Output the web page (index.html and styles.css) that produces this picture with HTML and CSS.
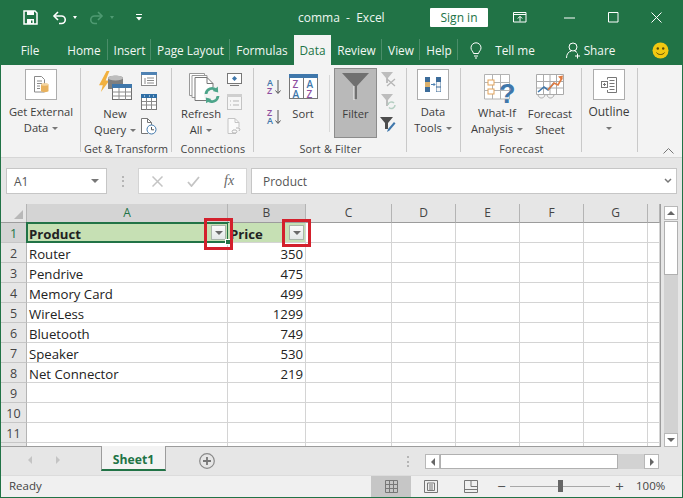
FILE: index.html
```html
<!DOCTYPE html>
<html lang="en">
<head>
<meta charset="utf-8">
<title>comma - Excel</title>
<link rel="stylesheet" href="styles.css">
</head>
<body>
<div class="window">
  <header class="titlebar">
    <svg class="qa qa-save" width="15" height="15" viewBox="0 0 15 15"><path d="M1 1h11l2 2v11H1z" fill="none" stroke="#fff" stroke-width="1.5"/><rect x="4" y="1" width="7" height="4" fill="#fff"/><rect x="4" y="9" width="7" height="5" fill="#fff"/><rect x="8" y="10.500" width="1.500" height="2.500" fill="#217346"/></svg>
    <svg class="qa qa-undo" width="15" height="14" viewBox="0 0 15 14"><path d="M2 5h7.500a3.700 3.700 0 0 1 0 7.500H7" fill="none" stroke="#fff" stroke-width="1.600"/><path d="M6 1 2 5l4 4" fill="none" stroke="#fff" stroke-width="1.600"/></svg>
    <span class="qa-caret"></span>
    <svg class="qa qa-redo" width="15" height="14" viewBox="0 0 15 14"><path d="M13 5H5.500a3.700 3.700 0 0 0 0 7.500H8" fill="none" stroke="#4f9a72" stroke-width="1.600"/><path d="m9 1 4 4-4 4" fill="none" stroke="#4f9a72" stroke-width="1.600"/></svg>
    <span class="qa-caret qa-caret-dim"></span>
    <svg class="qa qa-more" width="6" height="7" viewBox="0 0 6 7"><path d="M0 .5h6" stroke="#fff"/><path d="m0 3 3 3.500L6 3z" fill="#fff"/></svg>
    <span class="doc-title">comma&nbsp; -&nbsp; Excel</span>
    <span class="signin">Sign in</span>
    <svg class="win win-ribbon" width="14" height="11" viewBox="0 0 14 11"><path d="M.5.500h12.500v9.500H.5zM.5 2.500h12.500" fill="none" stroke="#fff"/><path d="M7 9.500V4.500M4.800 6.500 7 4.300l2.200 2.200" fill="none" stroke="#fff"/></svg>
    <svg class="win win-min" width="11" height="2" viewBox="0 0 11 2"><path d="M0 1h11" stroke="#fff"/></svg>
    <svg class="win win-max" width="11" height="11" viewBox="0 0 11 11"><path d="M.5.500h9.500v9.500H.5z" fill="none" stroke="#fff"/></svg>
    <svg class="win win-close" width="11" height="11" viewBox="0 0 11 11"><path d="m.5.500 10 10m0-10-10 10" stroke="#fff"/></svg>
  </header>

  <nav class="tabs">
    <span class="tab tab-file">File</span>
    <span class="tab tab-home sep">Home</span>
    <span class="tab tab-insert sep">Insert</span>
    <span class="tab tab-layout sep">Page Layout</span>
    <span class="tab tab-formulas">Formulas</span>
    <span class="tab tab-data">Data</span>
    <span class="tab tab-review sep">Review</span>
    <span class="tab tab-view sep">View</span>
    <span class="tab tab-help sep">Help</span>
    <svg class="tell-bulb" width="12" height="17" viewBox="0 0 12 17"><path d="M3.500 11.500C3 9 1 8.500 1 5.800a5 5 0 0 1 10 0C11 8.500 9 9 8.500 11.500zM4 14h4M5 16h2" fill="none" stroke="#fff"/></svg>
    <span class="tab tab-tell">Tell me</span>
    <svg class="share-icon" width="16" height="17" viewBox="0 0 16 17"><circle cx="7" cy="5" r="4" fill="none" stroke="#fff"/><path d="M.5 16c0-4 2-6.500 5-7M8.500 9c1 .2 2 .8 2.500 1.500M11.500 11.500v5M9 14h5" fill="none" stroke="#fff"/></svg>
    <span class="tab tab-share">Share</span>
    <svg class="smiley" width="17" height="17" viewBox="0 0 17 17"><circle cx="8.500" cy="8.500" r="8" fill="#f2c811"/><circle cx="5.800" cy="6.500" r="1.200" fill="#5a4a08"/><circle cx="11.200" cy="6.500" r="1.200" fill="#5a4a08"/><path d="M4.500 10.500c1.500 2.700 6.500 2.700 8 0" fill="none" stroke="#5a4a08"/></svg>
  </nav>

  <section class="ribbon">
    <div class="group g-ext">
      <div class="gbody">
        <div class="big big-ext">
          <span class="iconbox"><svg width="15" height="17" viewBox="0 0 15 17"><path d="M.5.500h7l3 3V16H.5z" fill="#fff" stroke="#8a8a8a"/><path d="M3 5h5M3 7.500h5M3 10h3M3 12.500h3" stroke="#8a8a8a"/><path d="M7 8.500c0-1.500 7.500-1.500 7.500 0V15c0 1.500-7.500 1.500-7.500 0z" fill="#e8b25e"/><ellipse cx="10.800" cy="8.500" rx="3.700" ry="1.200" fill="#f4d6a4"/></svg></span>
          <span class="lines"><span>Get External</span><span>Data <i class="caret"></i></span></span>
        </div>
      </div>
    </div>

    <div class="group g-get">
      <div class="gbody">
        <div class="big big-query">
          <svg class="bigicon" width="34" height="30" viewBox="0 0 34 30"><path d="M8 0 0 15h4l-2 7 9-12H7l4-10z" fill="#f2b13f" transform="translate(0 0) scale(.95)"/><path d="M9 7c0-3 15-3 15 0v20H14V18H9z" fill="#7f7f7f"/><ellipse cx="16.500" cy="7" rx="7.500" ry="2.600" fill="#bdbdbd"/><rect x="13.500" y="13.500" width="19" height="15" fill="#fff" stroke="#6e6e6e"/><rect x="13" y="13" width="20" height="4" fill="#3f77ab"/><path d="M13.500 21h19M13.500 25h19M20 17v12M26.500 17v12" stroke="#8c8c8c"/></svg>
          <span class="lines"><span>New</span><span>Query <i class="caret"></i></span></span>
        </div>
        <div class="smalls smalls-get">
          <svg width="16" height="14" viewBox="0 0 16 14"><rect x=".5" y=".5" width="15" height="13" fill="#fff" stroke="#8a8a8a"/><rect width="16" height="3" fill="#4f82b3"/><path d="M6 6h7M6 8.500h7M6 11h7M4 6v6" stroke="#8a8a8a"/></svg>
          <svg width="16" height="16" viewBox="0 0 16 16"><rect x=".5" y=".5" width="15" height="15" fill="#fff" stroke="#777"/><rect width="16" height="4" fill="#2f6ea5"/><path d="M1 7.500h14M1 11h14M5.500 4v12M10.500 4v12" stroke="#8a8a8a"/><path d="M3 2h1M8 2h1M12 2h1" stroke="#fff"/></svg>
          <svg width="16" height="17" viewBox="0 0 16 17"><path d="M7 15.500H.5V.5h6l4 4v3" fill="#fff" stroke="#777"/><path d="M6.500.5v4h4" fill="none" stroke="#777"/><circle cx="10.500" cy="11.500" r="4.500" fill="#fff" stroke="#3f77ab"/><path d="M10.500 9v2.800h2.500" fill="none" stroke="#555"/></svg>
        </div>
      </div>
      <div class="glabel glabel-tight">Get &amp; Transform</div>
    </div>

    <div class="group g-conn">
      <div class="gbody">
        <div class="big big-refresh">
          <svg class="bigicon" width="31" height="30" viewBox="0 0 31 30"><path d="M.5.500h15v22H.5z" fill="#fff" stroke="#999"/><path d="M3 2.500h15v22H3z" fill="#fff" stroke="#999"/><path d="M6 4.500h12l6 6v17H6z" fill="#fff" stroke="#777"/><path d="M18 4.500v6h6" fill="none" stroke="#777"/><circle cx="23" cy="22" r="8" fill="#f3f3f3"/><path d="M17 21a6 6 0 0 1 10.500-3.500M29 23a6 6 0 0 1-10.500 3.500" fill="none" stroke="#4da58a" stroke-width="2.800"/><path d="m28.800 13.500.4 6-5.500-1.500zM17.200 30.500l-.4-6 5.500 1.500z" fill="#4da58a"/></svg>
          <span class="lines"><span>Refresh</span><span>All <i class="caret"></i></span></span>
        </div>
        <div class="smalls smalls-conn">
          <svg width="15" height="13" viewBox="0 0 15 13"><rect x=".5" y=".5" width="14" height="10" fill="#fff" stroke="#777"/><path d="m7.500 3 2.500 2.500L7.500 8 5 5.500z" fill="#3f77ab"/><path d="M3 12.500h9" stroke="#777"/></svg>
          <svg width="15" height="16" viewBox="0 0 15 16"><rect x=".5" y=".5" width="14" height="15" fill="#f6f6f6" stroke="#c4c4c4"/><rect width="15" height="3" fill="#cfcfcf"/><path d="M6 7h6M6 11h6M3 7h1M3 11h1" stroke="#b5b5b5"/></svg>
          <svg width="15" height="16" viewBox="0 0 15 16"><path d="M9 15.500H1V.5h7l4 4v5" fill="#fafafa" stroke="#c4c4c4"/><path d="M8 .5v4h4" fill="none" stroke="#c4c4c4"/><path d="M6 12h3a2 2 0 0 1 0 3H6a2 2 0 0 1 0-3zM9 10h3a2 2 0 0 1 0 3" fill="none" stroke="#b5b5b5"/></svg>
        </div>
      </div>
      <div class="glabel">Connections</div>
    </div>

    <div class="group g-sort">
      <div class="gbody">
        <div class="smalls smalls-az">
          <svg class="showall" width="14" height="17" viewBox="0 0 14 17"><text class="az az-b" x="0" y="7.500">A</text><text class="az az-p" x="0" y="16">Z</text><path d="M11 2v13M8.500 12.500 11 15.500l2.500-3" fill="none" stroke="#555"/></svg>
          <svg class="showall" width="14" height="17" viewBox="0 0 14 17"><text class="az az-p" x="0" y="7.500">Z</text><text class="az az-b" x="0" y="16">A</text><path d="M11 2v13M8.500 12.500 11 15.500l2.500-3" fill="none" stroke="#555"/></svg>
        </div>
        <div class="big big-sort">
          <svg class="bigicon showall" width="29" height="25" viewBox="0 0 29 25"><rect x=".5" y=".5" width="28" height="24" fill="#fff" stroke="#777"/><rect width="29" height="4" fill="#3f77ab"/><path d="M14.500 4v21" stroke="#777"/><text class="azl az-p" x="3.500" y="14">Z</text><text class="azl az-b" x="3.500" y="23.500">A</text><text class="azl az-b" x="17.500" y="14">A</text><text class="azl az-p" x="17.500" y="23.500">Z</text></svg>
          <span class="lines"><span>Sort</span></span>
        </div>
        <span class="vsep"></span>
        <div class="big big-filter">
          <svg class="bigicon" width="27" height="27" viewBox="0 0 27 27"><path d="M0 0h27L15 13v14h-3V13z" fill="#707070"/><path d="M12 13v14h3" fill="none" stroke="#f3f3f3"/></svg>
          <span class="lines"><span>Filter</span></span>
        </div>
        <div class="smalls smalls-filter">
          <svg width="15" height="15" viewBox="0 0 15 15"><path d="M0 0h12L7 6v5H5V6z" fill="#bdbdbd"/><path d="m6 7 8 7m0-7-8 7" stroke="#b5b5b5" stroke-width="1.300"/></svg>
          <svg width="15" height="16" viewBox="0 0 15 16"><path d="M0 0h12L7 6v6H5V6z" fill="#bdbdbd"/><path d="M7 11a3.500 3.500 0 0 1 6-2M14 11a3.500 3.500 0 0 1-6 2.500" fill="none" stroke="#b5cfc2" stroke-width="1.500"/></svg>
          <svg width="16" height="16" viewBox="0 0 16 16"><path d="M0 0h13L8 6v6H5V6z" fill="#4d4d4d"/><path d="m7 15 1-3 6-7 1.500 1.500-6 7z" fill="#3f77ab"/></svg>
        </div>
      </div>
      <div class="glabel">Sort &amp; Filter</div>
    </div>

    <div class="group g-tools">
      <div class="gbody">
        <div class="big big-tools">
          <span class="iconbox"><svg width="16" height="15" viewBox="0 0 16 15"><rect width="5" height="15" fill="#3d6d9b"/><rect y="5" width="5" height="5" fill="#dcb26e"/><rect x="11" width="5" height="15" fill="#3d6d9b"/><rect x="11.500" y="5" width="4" height="4.500" fill="#f7f7f7"/><rect x="11.500" y="10.500" width="4" height="4" fill="#f7f7f7"/><path d="M6 7.500h4M8.500 6l1.500 1.500L8.500 9" fill="none" stroke="#4f82b3"/></svg></span>
          <span class="lines"><span>Data</span><span>Tools <i class="caret"></i></span></span>
        </div>
      </div>
    </div>

    <div class="group g-fore">
      <div class="gbody">
        <div class="big big-whatif">
          <svg class="bigicon" width="32" height="36" viewBox="0 0 32 36"><path d="M.5.500h25v24.500H.5zM.5 8.500h25M.5 16.500h25M8.500.5v24.500M16.500.5v24.500" fill="#fff" stroke="#b3b3b3"/><rect x="4" y="6" width="6" height="5" fill="#fff" stroke="#e3a35a"/><rect x="4" y="15" width="6" height="5" fill="#fff" stroke="#e3a35a"/><text class="q" x="15" y="29">?</text></svg>
          <span class="lines"><span>What-If</span><span>Analysis <i class="caret"></i></span></span>
        </div>
        <div class="big big-fsheet">
          <svg class="bigicon" width="28" height="25" viewBox="0 0 28 25"><path d="M.5.500h27v20H.5zM.5 7.500h27M.5 14h27M7.500.5v20M14 .5v20M20.500.5v20" fill="#fff" stroke="#aaa"/><path d="M2 18l6-5 4 3 6-7" fill="none" stroke="#3f77ab" stroke-width="1.600"/><path d="M12 16l6-7 4 2 4-7" fill="none" stroke="#e07a3f" stroke-width="1.600"/><path d="m22 2.500 5-1-1 5z" fill="#e07a3f"/><path d="M2 21c1 4 6 4 7 0M11 21c1 4 6 4 7 0" fill="none" stroke="#aaa"/></svg>
          <span class="lines"><span>Forecast</span><span>Sheet</span></span>
        </div>
      </div>
      <div class="glabel">Forecast</div>
    </div>

    <div class="group g-out">
      <div class="gbody">
        <div class="big big-out">
          <span class="iconbox"><svg width="16" height="16" viewBox="0 0 16 16"><rect x=".5" y="4.500" width="6" height="6" fill="#fff" stroke="#777"/><path d="M2 7.500h3M3.500 6v3" stroke="#777"/><path d="M6.500 2.500V.5h9v15h-9v-2.500" fill="none" stroke="#777"/><path d="M8.500 3.500h5M8.500 6.500h5M8.500 9.500h5M8.500 12.500h5" stroke="#777"/></svg></span>
          <span class="lines"><span>Outline</span><span><i class="caret"></i></span></span>
        </div>
      </div>
    </div>
    <svg class="collapse" width="11" height="6" viewBox="0 0 11 6"><path d="m.5 5.500 5-5 5 5" fill="none" stroke="#777"/></svg>
  </section>

  <div class="formula">
    <div class="namebox"><span>A1</span><i class="caret caret-lg"></i></div>
    <span class="grip"></span>
    <div class="fbtns">
      <svg width="11" height="11" viewBox="0 0 11 11"><path d="m.5.500 10 10m0-10-10 10" stroke="#c4c4c4" stroke-width="1.500"/></svg>
      <svg width="13" height="11" viewBox="0 0 13 11"><path d="m1 6 3.500 4L12 1" fill="none" stroke="#c4c4c4" stroke-width="1.800"/></svg>
      <span class="fx">fx</span>
    </div>
    <div class="finput"><span>Product</span><svg width="8" height="6" viewBox="0 0 8 6"><path d="m1 1 3 3 3-3" fill="none" stroke="#777" stroke-width="1.500"/></svg></div>
  </div>

  <div class="sheetarea">
    <div class="gridwrap">
      <table class="grid">
        <colgroup><col class="c0"><col class="ca"><col class="cb"><col class="cc"><col class="cd"><col class="cd"><col class="cd"><col class="cd"><col class="ch"></colgroup>
        <thead>
          <tr><th class="corner"><span class="tri"></span></th><th class="hot green">A</th><th class="hot">B</th><th>C</th><th>D</th><th>E</th><th>F</th><th>G</th><th></th></tr>
        </thead>
        <tbody>
          <tr class="r1"><th class="hot green">1</th>
            <td class="hdr">Product<span class="fbtn fbtn-a"><i class="caret"></i></span><span class="sel"></span><span class="handle"></span><span class="mark mark-a"></span></td>
            <td class="hdr">Price<span class="fbtn fbtn-b"><i class="caret"></i></span><span class="mark mark-b"></span></td>
            <td></td><td></td><td></td><td></td><td></td><td></td></tr>
          <tr><th>2</th><td>Router</td><td class="num">350</td><td></td><td></td><td></td><td></td><td></td><td></td></tr>
          <tr><th>3</th><td>Pendrive</td><td class="num">475</td><td></td><td></td><td></td><td></td><td></td><td></td></tr>
          <tr><th>4</th><td>Memory Card</td><td class="num">499</td><td></td><td></td><td></td><td></td><td></td><td></td></tr>
          <tr><th>5</th><td>WireLess</td><td class="num">1299</td><td></td><td></td><td></td><td></td><td></td><td></td></tr>
          <tr><th>6</th><td>Bluetooth</td><td class="num">749</td><td></td><td></td><td></td><td></td><td></td><td></td></tr>
          <tr><th>7</th><td>Speaker</td><td class="num">530</td><td></td><td></td><td></td><td></td><td></td><td></td></tr>
          <tr><th>8</th><td>Net Connector</td><td class="num">219</td><td></td><td></td><td></td><td></td><td></td><td></td></tr>
          <tr><th>9</th><td></td><td></td><td></td><td></td><td></td><td></td><td></td><td></td></tr>
          <tr><th>10</th><td></td><td></td><td></td><td></td><td></td><td></td><td></td><td></td></tr>
          <tr><th>11</th><td></td><td></td><td></td><td></td><td></td><td></td><td></td><td></td></tr>
          <tr><th></th><td></td><td></td><td></td><td></td><td></td><td></td><td></td><td></td></tr>
        </tbody>
      </table>
    </div>
    <div class="vscroll">
      <span class="sbtn"><i class="tri-up"></i></span>
      <span class="vthumb"></span>
      <span class="vtrack"></span>
      <span class="sbtn"><i class="tri-down"></i></span>
    </div>
  </div>

  <div class="sheetbar">
    <i class="nav-l"></i>
    <i class="nav-r"></i>
    <span class="sheettab">Sheet1</span>
    <svg class="addsheet" width="16" height="16" viewBox="0 0 16 16"><circle cx="8" cy="8" r="7.300" fill="none" stroke="#8a8a8a" stroke-width="1.200"/><path d="M8 4v8M4 8h8" stroke="#777" stroke-width="1.800"/></svg>
    <span class="grip grip-h"></span>
    <div class="hscroll">
      <span class="sbtn hbtn"><i class="tri-left"></i></span>
      <span class="hthumb"></span>
      <span class="htrack"></span>
      <span class="sbtn hbtn"><i class="tri-right"></i></span>
    </div>
  </div>

  <footer class="status">
    <span class="ready">Ready</span>
    <span class="view view-on"><svg width="13" height="13" viewBox="0 0 13 13"><path d="M.5.500h12v12H.5zM.5 4.500h12M.5 8.500h12M4.500.5v12M8.500.5v12" fill="none" stroke="#777"/></svg></span>
    <span class="view"><svg width="14" height="13" viewBox="0 0 14 13"><path d="M.5.500h13v12H.5z" fill="none" stroke="#777"/><path d="M3.500 3v7.500h7V3zM5 5h4M5 7h4M5 9h4" fill="none" stroke="#777"/></svg></span>
    <span class="view"><svg width="14" height="13" viewBox="0 0 14 13"><path d="M.5.500h13v12H.5zM.5 9.500h13M7 .5v6h6.500" fill="none" stroke="#777"/></svg></span>
    <span class="zm">&#8722;</span>
    <span class="slider"><i class="knob"></i></span>
    <span class="zm zm-plus">+</span>
    <span class="zoomval">100%</span>
  </footer>
</div>
</body>
</html>
```
FILE: styles.css
```css
* { box-sizing: border-box; }
html, body { margin: 0; padding: 0; }
body { width: 683px; height: 498px; overflow: hidden; font-family: "Open Sans", "Noto Sans", sans-serif; font-size: 11.5px; color: #3c3c3c; background: #e6e6e6; }
i { display: inline-block; font-style: normal; }

.window { width: 683px; height: 498px; border: 1px solid #217346; border-top: 0; display: flex; flex-direction: column; }

/* title bar */
.titlebar { height: 35px; flex: none; margin: 0 -1px; background: #217346; display: flex; align-items: center; color: #fff; }
.qa-save { margin-left: 23px; }
.qa-undo { margin-left: 14px; }
.qa-redo { margin-left: 12px; }
.qa-more { margin-left: 22px; }
.qa-caret { width: 0; height: 0; border: 2.500px solid transparent; border-top: 3px solid #fff; border-bottom: 0; margin-left: 6px; }
.qa-caret-dim { border-top-color: #4f9a72; margin-left: 6px; }
.doc-title { margin-left: 156px; width: 132px; font-size: 12px; color: #eef6f1; white-space: nowrap; }
.signin { width: 58px; height: 19px; background: #fff; color: #217346; border-radius: 1px; font-size: 12px; line-height: 19px; text-align: center; }
.win-ribbon { margin-left: 25px; }
.win-min { margin-left: 37px; }
.win-max { margin-left: 33px; }
.win-close { margin-left: 32px; }

/* tabs */
.tabs { height: 30px; flex: none; margin: 0 -1px; background: #217346; display: flex; align-items: stretch; color: #f2f7f4; font-size: 11.800px; }
.tab { display: flex; align-items: center; justify-content: center; height: 30px; position: relative; white-space: nowrap; }
.sep::after { content: ""; position: absolute; right: 0; top: 4px; height: 21px; width: 1px; background: #4a8d69; }
.tab-file { width: 60px; }
.tab-home { width: 48px; }
.tab-insert { width: 43px; }
.tab-layout { width: 79px; }
.tab-formulas { width: 64px; }
.tab-data { width: 37px; background: #f3f3f3; color: #217346; }
.tab-review { width: 51px; }
.tab-view { width: 38px; }
.tab-help { width: 38px; }
.tell-bulb { margin: 7px 0 0 12px; }
.tab-tell { margin-left: 13px; width: 40px; }
.share-icon { margin: 7px 0 0 31px; }
.tab-share { margin-left: 2px; width: 31px; }
.smiley { margin: 7px 0 0 37px; }

/* ribbon */
.ribbon { height: 93px; flex: none; background: #f3f3f3; border-bottom: 1px solid #d6d6d6; display: flex; position: relative; }
.group { display: flex; flex-direction: column; height: 92px; position: relative; flex: none; }
.group::after { content: ""; position: absolute; right: 0; top: 3px; height: 84px; width: 1px; background: #c9c9c9; }
.gbody { height: 76px; display: flex; flex: none; }
.glabel { height: 15px; line-height: 15px; text-align: center; font-size: 10.800px; letter-spacing: .2px; color: #444; white-space: nowrap; }
.glabel-tight { letter-spacing: 0; padding-right: 1px; }
.g-ext { width: 80px; }
.g-get { width: 91px; }
.g-conn { width: 82px; }
.g-sort { width: 153px; }
.g-tools { width: 54px; }
.g-fore { width: 121px; }
.g-out { width: 56px; }

.big { display: flex; flex-direction: column; align-items: center; flex: none; }
.iconbox { width: 32px; height: 31px; margin-top: 4px; background: #fff; border: 1px solid #adadad; display: flex; align-items: center; justify-content: center; flex: none; }
.lines { display: flex; flex-direction: column; align-items: center; line-height: 16px; white-space: nowrap; font-size: 11.200px; }
.bigicon { flex: none; }
.showall { overflow: visible; }
.caret { width: 0; height: 0; border: 3px solid transparent; border-top: 3px solid #777; border-bottom: 0; vertical-align: 2px; margin-left: 1px; }
.caret-lg { border-width: 4px; border-top-width: 4px; border-bottom: 0; border-top-color: #777; }
.smalls { display: flex; flex-direction: column; align-items: center; flex: none; }

.big-ext { width: 80px; }
.big-ext .lines { margin-top: 4px; }

.big-query { width: 46px; margin-left: 11px; padding-top: 6px; }
.big-query .lines { margin-top: 5px; }
.big-query .bigicon { margin-left: 2px; }
.smalls-get { width: 16px; margin-left: 3px; padding-top: 7px; gap: 8px; }

.big-refresh { width: 50px; margin-left: 4px; padding-top: 8px; }
.big-refresh .lines { margin-top: 3px; }
.big-refresh .bigicon { margin-left: 6px; }
.smalls-conn { width: 15px; margin-left: 1px; padding-top: 8px; gap: 8px; }

.smalls-az { width: 14px; margin-left: 13px; padding-top: 13px; gap: 13px; }
.big-sort { width: 40px; margin-left: 2px; padding-top: 9px; }
.big-sort .lines { margin-top: 7px; }
.vsep { width: 1px; height: 57px; margin: 10px 0 0 6px; background: #d8d8d8; flex: none; }
.big-filter { width: 43px; height: 70px; margin: 3px 0 0 4px; background: #b9b9b9; border: 1px solid #8c8c8c; padding-top: 4px; }
.big-filter .lines { margin-top: 6px; }
.smalls-filter { width: 16px; margin-left: 3px; padding-top: 7px; gap: 7px; }
.az { font-size: 9px; font-weight: 600; }
.azl { font-size: 10px; font-weight: 600; }
.az-b { fill: #3f77ab; }
.az-p { fill: #8e4fa0; }

.big-tools { width: 54px; margin-left: -1px; }
.big-tools .lines { margin-top: 4px; }

.big-whatif { width: 56px; margin-left: 8px; padding-top: 9px; }
.big-whatif .bigicon { margin-left: 6px; }
.big-whatif .lines { margin-top: -5px; }
.q { font-family: "Liberation Sans", sans-serif; font-size: 27px; font-weight: 700; fill: #3f77ab; }
.big-fsheet { width: 50px; padding-top: 9px; }
.big-fsheet .lines { margin-top: 7px; }

.big-out { width: 56px; margin-left: -1px; }
.big-out .lines { margin-top: 4px; font-size: 12px; }
.collapse { position: absolute; right: 8px; top: 83px; }

/* formula bar */
.formula { height: 46px; flex: none; display: flex; align-items: center; padding: 0 5px; background: #e6e6e6; }
.namebox { width: 101px; height: 26px; background: #fff; border: 1px solid #c6c6c6; display: flex; align-items: center; justify-content: space-between; padding: 0 7px; font-size: 12px; color: #555; }
.grip { width: 2px; height: 11px; margin-left: 15px; flex: none; background: repeating-linear-gradient(#b5b5b5 0 2px, transparent 2px 4.500px); }
.fbtns { width: 109px; height: 26px; margin-left: 14px; background: #fff; border: 1px solid #d4d4d4; display: flex; align-items: center; padding-left: 13px; gap: 24px; }
.fx { font-family: "Liberation Serif", serif; font-style: italic; font-size: 14px; color: #666; }
.finput { flex: 1; height: 26px; margin-left: 4px; background: #fff; border: 1px solid #c6c6c6; display: flex; align-items: center; justify-content: space-between; padding: 0 4px 0 11px; font-size: 12px; color: #555; }

/* sheet */
.sheetarea { height: 243px; flex: none; display: flex; background: #e6e6e6; }
.gridwrap { width: 660px; height: 243px; overflow: hidden; border-right: 1px solid #9c9c9c; border-bottom: 1px solid #9c9c9c; flex: none; }
.grid { border-collapse: separate; border-spacing: 0; table-layout: fixed; width: 659px; font-size: 13.200px; color: #222; }
.c0 { width: 26px; }
.ca { width: 201px; }
.cb { width: 78px; }
.cc { width: 86px; }
.cd { width: 64px; }
.ch { width: 12px; }
.grid th { padding: 3px 0 0; background: #e6e6e6; font-weight: 400; color: #444; text-align: center; height: 20px; font-size: 12.500px; line-height: 16px; border-right: 1px solid #b4b4b4; border-bottom: 1px solid #c6c6c6; }
.grid thead th { height: 19px; padding: 0; border-bottom: 1px solid #9c9c9c; font-size: 12px; }
.grid .hot { background: #d4d4d4; }
.grid .green { color: #217346; }
.grid td { height: 20px; padding: 3px 2px 0; border-right: 1px solid #d4d4d4; border-bottom: 1px solid #d4d4d4; background: #fff; white-space: nowrap; line-height: 16px; position: relative; }
.grid .num { text-align: right; }
.grid .hdr { background: #c6e0b4; font-weight: 700; overflow: visible; }
.corner { position: relative; }
.tri { position: absolute; right: 3px; bottom: 3px; width: 0; height: 0; border-left: 9px solid transparent; border-bottom: 9px solid #b8b8b8; }
.sel { position: absolute; left: -1px; top: -1px; right: -2px; bottom: -1px; border: 2px solid #217346; }
.handle { position: absolute; right: -4px; bottom: -3px; width: 6px; height: 6px; background: #217346; border: 1px solid #fff; z-index: 2; }
.fbtn { position: absolute; top: 2px; right: 1px; width: 15px; height: 15px; background: linear-gradient(#fafafa, #e4e8e8); border: 1px solid #a9b5a9; display: flex; align-items: center; justify-content: center; }
.fbtn .caret { margin: 0; border-width: 4px; border-bottom: 0; border-top-color: #6a6a6a; }
.mark { position: absolute; border: 3px solid #d3202c; z-index: 3; }
.mark-a { left: 177px; top: -5px; width: 29px; height: 32px; }
.mark-b { left: 54px; top: -4px; width: 29px; height: 28px; }

.vscroll { width: 14px; margin-left: 3px; display: flex; flex-direction: column; height: 243px; padding-top: 2px; flex: none; }
.sbtn { flex: none; width: 14px; height: 14px; background: #fff; border: 1px solid #b8b8b8; display: flex; align-items: center; justify-content: center; }
.vthumb { height: 54px; margin-top: 1px; background: #fff; border: 1px solid #b0b0b0; flex: none; }
.vtrack { flex: 1; background: #d2d2d2; }
.tri-up { width: 0; height: 0; border: 4px solid transparent; border-bottom: 4px solid #666; border-top: 0; }
.tri-down { width: 0; height: 0; border: 4px solid transparent; border-top: 4px solid #666; border-bottom: 0; }
.tri-left { width: 0; height: 0; border: 4px solid transparent; border-right: 4px solid #666; border-left: 0; }
.tri-right { width: 0; height: 0; border: 4px solid transparent; border-left: 4px solid #666; border-right: 0; }

/* sheet tabs */
.sheetbar { height: 28px; flex: none; background: #e6e6e6; display: flex; align-items: flex-start; }
.nav-l { width: 0; height: 0; margin: 9px 0 0 27px; border: 4px solid transparent; border-right: 4px solid #c4c4c4; border-left: 0; }
.nav-r { width: 0; height: 0; margin: 9px 0 0 24px; border: 4px solid transparent; border-left: 4px solid #c4c4c4; border-right: 0; }
.sheettab { width: 65px; height: 25px; margin-left: 41px; margin-top: -1px; background: #f3f3f3; border: 1px solid #9c9c9c; border-top: 0; border-bottom: 2px solid #217346; color: #217346; font-weight: 700; font-size: 12.200px; text-align: center; line-height: 27px; }
.addsheet { margin: 6px 0 0 33px; }
.grip-h { margin: 9px 0 0 192px; }
.hscroll { width: 234px; height: 15px; margin: 7px 0 0 16px; display: flex; flex: none; }
.hbtn { width: 15px; height: 15px; }
.hthumb { width: 178px; background: #fff; border: 1px solid #b0b0b0; flex: none; }
.htrack { flex: 1; background: #d2d2d2; }

/* status bar */
.status { flex: 1; background: #f0f0f0; display: flex; align-items: center; font-size: 11.500px; color: #444; border-top: 1px solid #dcdcdc; }
.ready { margin-left: 8px; width: 362px; padding-bottom: 2px; }
.view { width: 40px; align-self: stretch; display: flex; align-items: center; justify-content: center; }
.view-on { background: #c6c6c6; }
.zm { width: 9px; margin-left: 6px; font-size: 15px; text-align: center; line-height: 15px; color: #555; }
.slider { width: 100px; height: 1px; margin-left: 4px; background: #a8a8a8; position: relative; }
.knob { position: absolute; left: 48px; top: -6px; width: 5px; height: 12px; background: #666; }
.zm-plus { margin-left: 5px; }
.zoomval { margin-left: 12px; padding-bottom: 2px; }
```
